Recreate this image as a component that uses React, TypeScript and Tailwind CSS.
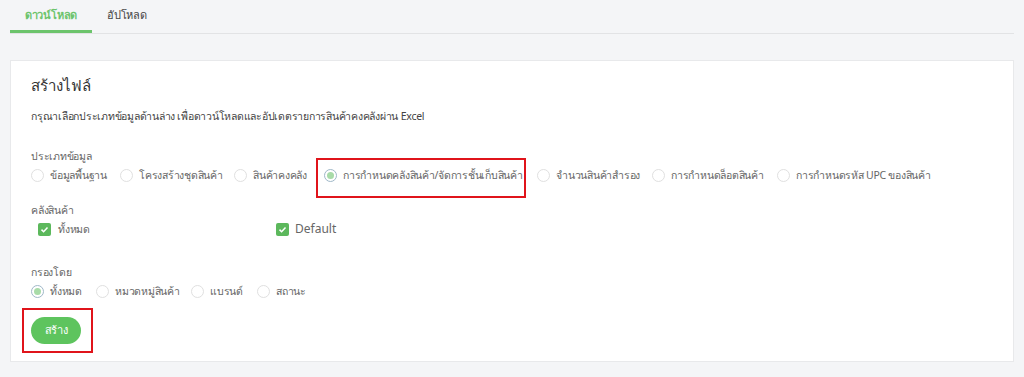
import { useState } from 'react';

const dataTypes = [
  { label: 'ข้อมูลพื้นฐาน', w: 'w-[89px]' },
  { label: 'โครงสร้างชุดสินค้า', w: 'w-[114px]' },
  { label: 'สินค้าคงคลัง', w: 'w-[90px]' },
  { label: 'การกำหนดคลังสินค้า/จัดการชั้นเก็บสินค้า', w: 'w-[213px]' },
  { label: 'จำนวนสินค้าสำรอง', w: 'w-[115px]' },
  { label: 'การกำหนดล็อตสินค้า', w: 'w-[125px]' },
  { label: 'การกำหนดรหัส UPC ของสินค้า', w: 'w-auto' },
];

const filters = [
  { label: 'ทั้งหมด', w: 'w-[65px]' },
  { label: 'หมวดหมู่สินค้า', w: 'w-[95px]' },
  { label: 'แบรนด์', w: 'w-[66px]' },
  { label: 'สถานะ', w: 'w-auto' },
];

function Radio({ checked }: { checked: boolean }) {
  return (
    <span
      className={`flex h-[13px] w-[13px] shrink-0 items-center justify-center rounded-full border ${
        checked ? 'border-[#9fb8c8]' : 'border-[#e0e0e0]'
      } bg-white`}
    >
      {checked && <span className="h-[7px] w-[7px] rounded-full bg-[#a8dba8]" />}
    </span>
  );
}

function Checkbox() {
  return (
    <span className="flex h-[13px] w-[13px] shrink-0 items-center justify-center rounded-[2px] bg-[#5cb85c]">
      <svg viewBox="0 0 12 12" className="h-[9px] w-[9px]" fill="none" stroke="white" strokeWidth="2">
        <path d="M2 6.2 L4.8 9 L10 3.2" />
      </svg>
    </span>
  );
}

export default function App() {
  const [dataType, setDataType] = useState(3);
  const [filter, setFilter] = useState(0);

  return (
    <div className="relative h-[377px] w-[1024px] overflow-hidden bg-[#f4f5f7] font-['Noto_Sans',sans-serif] text-[#666]">
      {/* Tabs */}
      <div className="mx-[10px] flex h-[34px] items-end border-b border-[#e2e3e5] text-[11px] tracking-[-0.2px]">
        <button className="w-[82px] border-b-[3px] border-[#6cc46c] pb-[7px] font-semibold text-[#6cc46c]">
          ดาวน์โหลด
        </button>
        <button className="w-[70px] pb-[10px] font-medium text-[#444]">อัปโหลด</button>
      </div>

      {/* Card */}
      <div className="mx-[10px] mt-[26px] h-[302px] border border-[#e8e9eb] bg-white px-[20px] pt-[12px] text-[10.5px] tracking-[-0.25px]">
        <h2 className="text-[15px] font-medium leading-[24px] tracking-normal text-[#333]">สร้างไฟล์</h2>
        <p className="mt-[10px] whitespace-nowrap leading-[18px] text-[#444]">
          กรุณาเลือกประเภทข้อมูลด้านล่าง เพื่อดาวน์โหลดและอัปเดตรายการสินค้าคงคลังผ่าน Excel
        </p>

        <div className="mt-[22px] leading-[18px]">ประเภทข้อมูล</div>
        <div className="flex items-center whitespace-nowrap leading-[20px]">
          {dataTypes.map((t, i) => (
            <label
              key={t.label}
              onClick={() => setDataType(i)}
              className={`flex shrink-0 cursor-pointer items-center gap-[6px] ${t.w}`}
            >
              <Radio checked={dataType === i} />
              <span>{t.label}</span>
            </label>
          ))}
        </div>

        <div className="mt-[16px] leading-[18px]">คลังสินค้า</div>
        <div className="grid grid-cols-[238px_1fr] pl-[7px] leading-[20px]">
          <label className="flex items-center gap-[7px]">
            <Checkbox />
            <span>ทั้งหมด</span>
          </label>
          <label className="flex items-center gap-[6px] text-[12px] tracking-normal">
            <Checkbox />
            <span>Default</span>
          </label>
        </div>

        <div className="mt-[24px] leading-[18px]">กรองโดย</div>
        <div className="flex items-center whitespace-nowrap leading-[20px]">
          {filters.map((t, i) => (
            <label
              key={t.label}
              onClick={() => setFilter(i)}
              className={`flex shrink-0 cursor-pointer items-center gap-[6px] ${t.w}`}
            >
              <Radio checked={filter === i} />
              <span>{t.label}</span>
            </label>
          ))}
        </div>

        <button className="mt-[16px] h-[27px] w-[50px] rounded-full bg-[#5ec45e] text-[11px] font-medium text-white">
          สร้าง
        </button>
      </div>

      {/* Annotation boxes */}
      <div className="pointer-events-none absolute left-[316px] top-[158px] h-[40px] w-[210px] border-2 border-[#e0141b]" />
      <div className="pointer-events-none absolute left-[22px] top-[308px] h-[45px] w-[71px] border-2 border-[#e0141b]" />
    </div>
  );
}
